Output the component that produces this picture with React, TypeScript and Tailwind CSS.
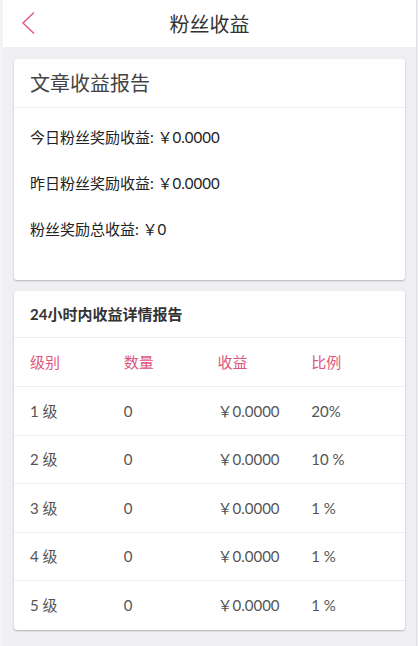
import React from "react";

const rows = [
  ["1 级", "0", "￥0.0000", "20%"],
  ["2 级", "0", "￥0.0000", "10 %"],
  ["3 级", "0", "￥0.0000", "1 %"],
  ["4 级", "0", "￥0.0000", "1 %"],
  ["5 级", "0", "￥0.0000", "1 %"],
];

export default function App() {
  return (
    <div
      className="w-[418px] h-[646px] bg-[#f3f3f6] pl-[3px] pr-[1px] overflow-hidden"
      style={{ fontFamily: 'Lato, "Noto Sans CJK SC", sans-serif' }}
    >
      <div className="h-full bg-[#efeff4] border-r border-[#e2e2e6] flex flex-col">
        <div className="h-[47px] bg-white relative flex items-center justify-center shrink-0">
          <svg className="absolute left-[18px] top-[11px]" width="16" height="24" viewBox="0 0 16 24" fill="none">
            <path d="M13 1.5 L2 12 L13 22.5" stroke="#e55c84" strokeWidth="1.5" />
          </svg>
          <span className="text-[20px] text-[#333]">粉丝收益</span>
        </div>

        <div className="mx-[11px] mt-[12px] bg-white rounded-[3px] shadow-[0_1px_2px_rgba(0,0,0,0.25)] h-[221px]">
          <div className="h-[49px] border-b border-[#f0f0f0] flex items-center pl-[16px]">
            <span className="text-[20px] text-[#444]">文章收益报告</span>
          </div>
          <div className="pt-[6px] pl-[16px] text-[15px] text-[#222]">
            <div className="h-[46px] flex items-center">今日粉丝奖励收益: ￥0.0000</div>
            <div className="h-[46px] flex items-center">昨日粉丝奖励收益: ￥0.0000</div>
            <div className="h-[46px] flex items-center">粉丝奖励总收益: ￥0</div>
          </div>
        </div>

        <div className="mx-[11px] mt-[11px] bg-white rounded-[3px] shadow-[0_1px_2px_rgba(0,0,0,0.25)]">
          <div className="h-[47px] border-b border-[#f0f0f0] flex items-center pl-[16px]">
            <span className="text-[15px] font-bold text-[#333]">24小时内收益详情报告</span>
          </div>
          <div className="h-[49px] border-b border-[#f0f0f0] grid grid-cols-4 items-center pl-[16px] text-[15px] text-[#e0567d]">
            <span>级别</span>
            <span>数量</span>
            <span>收益</span>
            <span>比例</span>
          </div>
          {rows.map((r, i) => (
            <div
              key={i}
              className={`h-[48.6px] grid grid-cols-4 items-center pl-[16px] text-[15px] text-[#555] ${
                i < rows.length - 1 ? "border-b border-[#f0f0f0]" : ""
              }`}
            >
              {r.map((c, j) => (
                <span key={j}>{c}</span>
              ))}
            </div>
          ))}
        </div>
      </div>
    </div>
  );
}
